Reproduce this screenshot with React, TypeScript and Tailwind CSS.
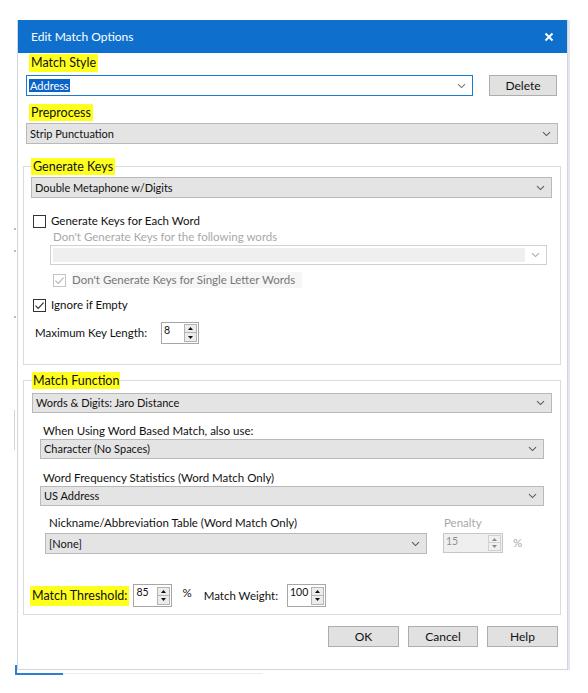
import React from "react";

const Chevron = ({ color = "#5a5a5a" }: { color?: string }) => (
  <svg width="9" height="6" viewBox="0 0 9 6" className="shrink-0">
    <path d="M1 1.2 L4.5 4.6 L8 1.2" fill="none" stroke={color} strokeWidth="1.1" />
  </svg>
);

function Combo({
  text,
  className,
  chevronClass = "mr-[6px]",
}: {
  text: string;
  className: string;
  chevronClass?: string;
}) {
  return (
    <div
      className={`flex items-center border border-[#b9b9b9] bg-[#e4e4e4] pl-[3px] text-[11px] text-[#111] ${className}`}
    >
      <span className="flex-1 truncate">{text}</span>
      <span className={chevronClass}>
        <Chevron />
      </span>
    </div>
  );
}

function Check({ checked, disabled }: { checked: boolean; disabled?: boolean }) {
  const c = disabled ? "#b8b8b8" : "#333333";
  return (
    <div
      className={`flex h-[13px] w-[13px] shrink-0 items-center justify-center border bg-white ${
        disabled ? "border-[#c4c4c4]" : "border-[#333333]"
      }`}
    >
      {checked && (
        <svg width="11" height="11" viewBox="0 0 11 11">
          <path d="M1.5 5.6 L4.2 8.3 L9.6 2.6" fill="none" stroke={c} strokeWidth="1.2" />
        </svg>
      )}
    </div>
  );
}

const Tri = ({ up, color }: { up: boolean; color: string }) => (
  <svg width="5" height="3" viewBox="0 0 5 3">
    <path d={up ? "M0 3 L2.5 0 L5 3 Z" : "M0 0 L2.5 3 L5 0 Z"} fill={color} />
  </svg>
);

function Spin({
  value,
  className,
  disabled,
}: {
  value: string;
  className: string;
  disabled?: boolean;
}) {
  const tc = disabled ? "#8a8a8a" : "#111";
  return (
    <div
      className={`flex items-stretch border ${
        disabled ? "border-[#c6c6c6] bg-[#efefef] text-[#8f8f8f]" : "border-[#a6a6a6] bg-white text-[#111]"
      } ${className}`}
    >
      <div className="flex-1 pl-[2px] pt-[1px] text-[10.5px] leading-[13px]">{value}</div>
      <div className="flex flex-col justify-center py-[1px] pr-[1px]">
        <div
          className={`flex h-[9px] w-[13px] items-center justify-center border ${
            disabled ? "border-[#d0d0d0] bg-[#f0f0f0]" : "border-[#b4b4b4] bg-[#ececec]"
          }`}
        >
          <Tri up color={tc} />
        </div>
        <div
          className={`flex h-[9px] w-[13px] items-center justify-center border border-t-0 ${
            disabled ? "border-[#d0d0d0] bg-[#f0f0f0]" : "border-[#b4b4b4] bg-[#ececec]"
          }`}
        >
          <Tri up={false} color={tc} />
        </div>
      </div>
    </div>
  );
}

function Btn({ label, className }: { label: string; className: string }) {
  return (
    <div
      className={`flex h-[21px] items-center justify-center border border-[#adadad] bg-[#e1e1e1] text-[12px] text-[#111] ${className}`}
    >
      {label}
    </div>
  );
}

export default function App() {
  return (
    <div className="relative h-[693px] w-[588px] overflow-hidden bg-white font-[family-name:Lato,sans-serif] text-[11.5px] leading-[16px] text-[#111]">
      {/* window behind the dialog */}
      <div className="absolute left-[15px] top-[665px] h-[10px] w-[48px] border-b-2 border-l-2 border-[#2d7fd6]" />
      <div className="absolute left-[63px] top-[673px] h-px w-[200px] bg-[#ececec]" />
      <div className="absolute left-[14px] top-[228px] h-[2px] w-[2px] bg-[#bbb]" />
      <div className="absolute left-[14px] top-[250px] h-[2px] w-[2px] bg-[#bbb]" />
      <div className="absolute left-[14px] top-[316px] h-[2px] w-[2px] bg-[#bbb]" />
      <div className="absolute left-[14px] top-[410px] h-[40px] w-px bg-[#d4d4d4]" />

      <div className="ml-[17px] mt-[20px] w-[551px] border-x border-b border-[#cfd6de] bg-white shadow-[2px_0_0_#e4e7eb]">
        {/* title bar */}
        <div className="flex h-[33px] items-center justify-between bg-[#0e6fcd] pl-[13px] pr-[13px] text-[12px] text-white">
          <span>Edit Match Options</span>
          <svg width="10" height="10" viewBox="0 0 10 10">
            <path d="M1.5 1.5 L8.5 8.5 M8.5 1.5 L1.5 8.5" stroke="white" strokeWidth="2" />
          </svg>
        </div>

        <div className="pl-[8px] pr-[8px]">
          {/* Match Style */}
          <div className="mt-px flex h-[18px]">
            <span className="ml-[3px] bg-[#ffff1e] px-[2px] text-[12.5px] leading-[18px]">Match Style</span>
          </div>
          <div className="mt-[3px] flex items-center">
            <div className="flex h-[21px] w-[447px] items-center border border-[#1b7bd4] bg-white pl-[2px] text-[11px]">
              <span className="flex-1">
                <span className="bg-[#0a64c8] px-px text-white">Address</span>
              </span>
              <span className="mr-[6px]">
                <Chevron color="#777" />
              </span>
            </div>
            <Btn label="Delete" className="ml-[16px] h-[20px] w-[68px]" />
          </div>

          {/* Preprocess */}
          <div className="mt-[8px] flex h-[17px]">
            <span className="ml-[3px] bg-[#ffff1e] px-[2px] text-[12.5px] leading-[17px]">Preprocess</span>
          </div>
          <Combo text="Strip Punctuation" className="mt-[2px] h-[21px] w-[532px]" />
        </div>

        {/* Generate Keys group */}
        <fieldset className="ml-[5px] mt-[14px] w-[538px] border border-[#dcdcdc] pb-[20px]">
          <legend className="ml-[7px] h-[17px] bg-[#ffff1e] px-[2px] text-[12.5px] leading-[17px]">Generate Keys</legend>
          <Combo text="Double Metaphone w/Digits" className="ml-[7px] mt-[2px] h-[21px] w-[521px]" />
          <div className="ml-[9px] mt-[15px] flex h-[16px] items-center">
            <Check checked={false} />
            <span className="ml-[5px]">Generate Keys for Each Word</span>
          </div>
          <div className="ml-[29px] h-[16px] text-[#a8a8a8]">Don't Generate Keys for the following words</div>
          <div className="ml-[26px] flex h-[20px] w-[497px] items-center border border-[#d0d0d0] bg-white p-[2px]">
            <div className="h-full flex-1 bg-[#efefef]" />
            <span className="ml-[6px] mr-[4px]">
              <Chevron color="#aaa" />
            </span>
          </div>
          <div className="ml-[29px] mt-[7px] flex h-[16px] items-center">
            <Check checked disabled />
            <span className="ml-[6px] bg-[#f6f6f6] pr-[7px] text-[#777]">Don't Generate Keys for Single Letter Words</span>
          </div>
          <div className="ml-[9px] mt-[9px] flex h-[16px] items-center">
            <Check checked />
            <span className="ml-[5px]">Ignore if Empty</span>
          </div>
          <div className="ml-[11px] mt-[9px] flex items-center">
            <span className="w-[126px]">Maximum Key Length:</span>
            <Spin value="8" className="h-[22px] w-[38px]" />
          </div>
        </fieldset>

        {/* Match Function group */}
        <fieldset className="ml-[5px] mt-[7px] w-[538px] border border-[#dcdcdc] pb-[7px]">
          <legend className="ml-[8px] h-[17px] bg-[#ffff1e] px-[1px] text-[12.5px] leading-[17px]">Match Function</legend>
          <Combo text="Words & Digits: Jaro Distance" className="ml-[8px] mt-[4px] h-[20px] w-[520px]" />
          <div className="ml-[19px] mt-[10px] h-[16px]">When Using Word Based Match, also use:</div>
          <Combo text="Character (No Spaces)" className="ml-[16px] h-[20px] w-[504px]" />
          <div className="ml-[19px] mt-[11px] h-[16px]">Word Frequency Statistics (Word Match Only)</div>
          <Combo text="US Address" className="ml-[16px] h-[20px] w-[504px]" />
          <div className="ml-[21px] mt-[9px] flex">
            <div className="w-[382px]">
              <div className="ml-[4px] h-[16px]">Nickname/Abbreviation Table (Word Match Only)</div>
              <Combo text="[None]" className="mt-[2px] h-[21px] w-[382px]" />
            </div>
            <div className="ml-[16px]">
              <div className="ml-px h-[16px] text-[#a8a8a8]">Penalty</div>
              <div className="mt-[2px] flex items-center">
                <Spin value="15" disabled className="h-[20px] w-[60px]" />
                <span className="ml-[10px] text-[#a8a8a8]">%</span>
              </div>
            </div>
          </div>
          <div className="ml-[6px] mt-[30px] flex h-[23px] items-center">
            <span className="h-[20px] bg-[#ffff1e] px-[2px] text-[12.5px] leading-[20px]">Match Threshold:</span>
            <Spin value="85" className="ml-[4px] h-[23px] w-[39px]" />
            <span className="mb-[6px] ml-[10px]">%</span>
            <span className="ml-[12px]">Match Weight:</span>
            <Spin value="100" className="ml-[9px] h-[23px] w-[39px]" />
          </div>
        </fieldset>

        {/* Buttons */}
        <div className="mt-[11px] flex justify-end gap-[9px] pb-[22px] pr-[9px]">
          <Btn label="OK" className="w-[71px]" />
          <Btn label="Cancel" className="w-[70px]" />
          <Btn label="Help" className="w-[71px]" />
        </div>
      </div>
    </div>
  );
}
